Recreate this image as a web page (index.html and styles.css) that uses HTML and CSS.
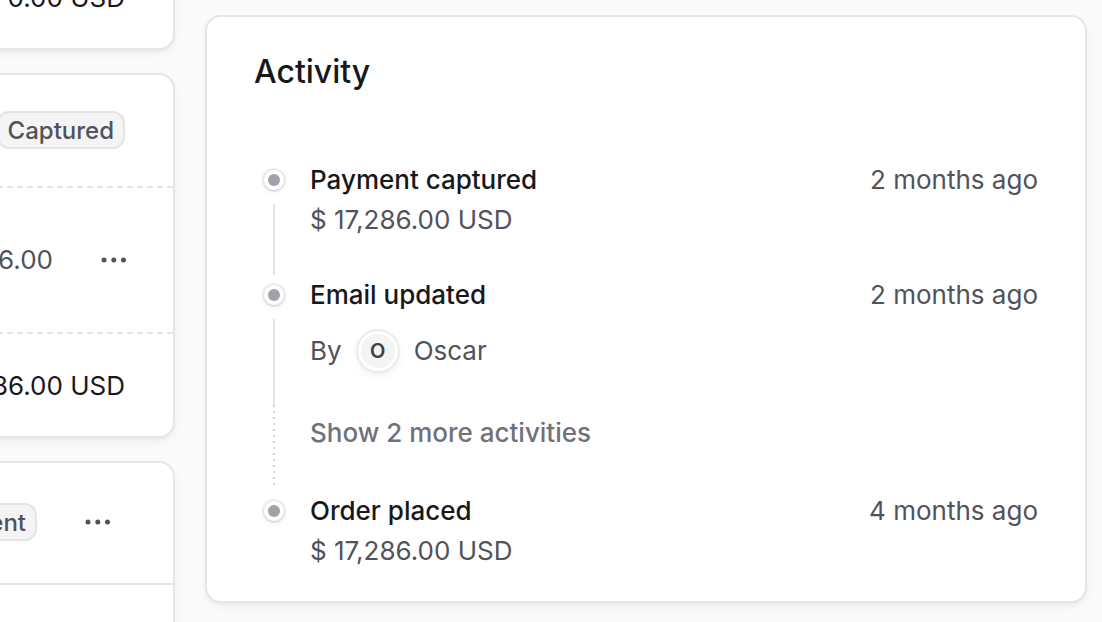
FILE: index.html
```html
<!DOCTYPE html>
<html lang="en">
<head>
<meta charset="utf-8">
<title>Order activity</title>
<link rel="stylesheet" href="styles.css">
</head>
<body>
<div class="page">
  <div class="side">
    <section class="card summary">
      <div class="sum-row">
        <span class="label">Outstanding amount</span>
        <span class="amt-strong">$ 0.00 USD</span>
      </div>
    </section>

    <section class="card payment">
      <div class="pay-head">
        <h3 class="card-title">Payment</h3>
        <span class="badge">Captured</span>
      </div>
      <div class="pay-row">
        <div class="pay-id">
          <span class="id">pay_01HQ2X</span>
          <span class="date">24 Jan, 2024</span>
        </div>
        <div class="pay-right">
          <span class="amt-subtle">$ 17,286.00</span>
          <button class="dots" type="button" aria-label="Actions">
            <svg width="26" height="6" viewBox="0 0 26 6"><circle cx="3" cy="3" r="2.5"/><circle cx="12.8" cy="3" r="2.5"/><circle cx="22.5" cy="3" r="2.5"/></svg>
          </button>
        </div>
      </div>
      <div class="pay-total">
        <span class="label">Total paid by customer</span>
        <span class="amt-strong">$ 17,286.00 USD</span>
      </div>
    </section>

    <section class="card fulfil">
      <div class="ful-head">
        <h3 class="card-title">Unfulfilled Items</h3>
        <div class="ful-right">
          <span class="badge">Awaiting fulfillment</span>
          <button class="dots" type="button" aria-label="Actions">
            <svg width="26" height="6" viewBox="0 0 26 6"><circle cx="3" cy="3" r="2.5"/><circle cx="12.8" cy="3" r="2.5"/><circle cx="22.5" cy="3" r="2.5"/></svg>
          </button>
        </div>
      </div>
      <div class="ful-row">
        <span class="label">Medusa Hoodie</span>
        <span class="amt-subtle">1x</span>
      </div>
    </section>
  </div>

  <section class="card activity">
    <h2 class="act-title">Activity</h2>
    <div class="timeline">
      <div class="item item-first">
        <div class="rail">
          <div class="dot-wrap"><div class="dot"><div class="dot-in"></div></div></div>
          <div class="line"></div>
        </div>
        <div class="content">
          <div class="head-row">
            <span class="ev-title">Payment captured</span>
            <span class="ev-time">2 months ago</span>
          </div>
          <div class="ev-body">$ 17,286.00 USD</div>
        </div>
      </div>

      <div class="item item-mid">
        <div class="rail">
          <div class="dot-wrap"><div class="dot"><div class="dot-in"></div></div></div>
          <div class="line"></div>
        </div>
        <div class="content">
          <div class="head-row">
            <span class="ev-title">Email updated</span>
            <span class="ev-time">2 months ago</span>
          </div>
          <div class="by-row">
            <span class="ev-body">By</span>
            <span class="avatar"><span class="avatar-in">O</span></span>
            <span class="ev-body">Oscar</span>
          </div>
        </div>
      </div>

      <div class="item item-more">
        <div class="rail">
          <div class="dotted"></div>
        </div>
        <div class="content">
          <button class="more" type="button">Show 2 more activities</button>
        </div>
      </div>

      <div class="item item-last">
        <div class="rail">
          <div class="dot-wrap"><div class="dot"><div class="dot-in"></div></div></div>
        </div>
        <div class="content">
          <div class="head-row">
            <span class="ev-title">Order placed</span>
            <span class="ev-time">4 months ago</span>
          </div>
          <div class="ev-body">$ 17,286.00 USD</div>
        </div>
      </div>
    </div>
  </section>
</div>
</body>
</html>
```

FILE: styles.css
```css
* { box-sizing: border-box; }

html, body {
  margin: 0;
  padding: 0;
  background: #fafafa;
  font-family: "Inter", "Noto Sans", sans-serif;
  color: #18181b;
  overflow: hidden;
}

.page {
  display: flex;
  align-items: flex-start;
  gap: 30px;
  padding-top: 15px;
  margin-left: -525px;
  width: 1612px;
}

.card {
  background: #ffffff;
  border: 2px solid #e6e6e9;
  border-radius: 16px;
  box-shadow: 0 2px 4px -2px rgba(0,0,0,0.08), 0 4px 8px rgba(0,0,0,0.04);
}

.side {
  flex: 0 0 700px;
  display: flex;
  flex-direction: column;
  gap: 23px;
  margin-top: -71px;
}

.card-title {
  margin: 0;
  font-size: 32px;
  line-height: 48px;
  font-weight: 500;
  color: #18181b;
}

.label {
  font-size: 26px;
  line-height: 40px;
  color: #52525b;
}

.amt-strong {
  font-size: 26px;
  line-height: 40px;
  color: #18181b;
}

.amt-subtle {
  font-size: 26px;
  line-height: 40px;
  color: #52525b;
}

.sum-row {
  display: flex;
  justify-content: space-between;
  padding: 32px 48px 30px 48px;
}

.badge {
  display: inline-flex;
  align-items: center;
  height: 38px;
  padding: 0 9px;
  border: 2px solid #e4e4e7;
  border-radius: 12px;
  background: #f4f4f5;
  color: #52525b;
  font-size: 24px;
  font-weight: 500;
  white-space: nowrap;
}

.pay-head {
  display: flex;
  align-items: center;
  justify-content: space-between;
  padding: 31px 48px 32px 48px;
}

.pay-row {
  display: flex;
  align-items: center;
  justify-content: space-between;
  padding: 32px 46px 32px 48px;
  border-top: 2px dashed #e4e4e7;
}

.pay-id {
  display: flex;
  flex-direction: column;
  font-size: 26px;
  line-height: 40px;
}

.pay-id .id { color: #18181b; font-weight: 500; }
.pay-id .date { color: #52525b; }

.pay-right {
  display: flex;
  align-items: center;
  gap: 48px;
}

.dots {
  display: flex;
  align-items: center;
  justify-content: center;
  width: 26px;
  height: 26px;
  padding: 0;
  border: 0;
  background: none;
  fill: #52525b;
}

.pay-total {
  display: flex;
  align-items: center;
  justify-content: space-between;
  padding: 32px 48px 30px 48px;
  border-top: 2px dashed #e4e4e7;
}

.ful-head {
  display: flex;
  align-items: center;
  justify-content: space-between;
  padding: 35px 62px 37px 48px;
}

.ful-right {
  display: flex;
  align-items: center;
  gap: 48px;
}

.ful-row {
  display: flex;
  align-items: center;
  justify-content: space-between;
  padding: 32px 48px;
  border-top: 2px solid #e4e4e7;
}

/* Activity card */
.activity {
  flex: 0 0 882px;
  padding: 31px 47px 30px 47px;
}

.act-title {
  margin: 0;
  font-size: 32px;
  line-height: 48px;
  font-weight: 500;
  color: #18181b;
}

.timeline {
  margin-top: 64px;
  display: flex;
  flex-direction: column;
}

.item {
  display: grid;
  grid-template-columns: 40px 1fr;
  column-gap: 16px;
  align-items: stretch;
}

.rail {
  display: flex;
  flex-direction: column;
  align-items: center;
}

.dot-wrap {
  width: 40px;
  height: 40px;
  display: flex;
  align-items: center;
  justify-content: center;
  flex: none;
}

.dot {
  width: 20px;
  height: 20px;
  border-radius: 50%;
  background: #ffffff;
  box-shadow: 0 0 0 2px rgba(0,0,0,0.08), 0 2px 4px -2px rgba(0,0,0,0.08), 0 4px 8px rgba(0,0,0,0.04);
  display: flex;
  align-items: center;
  justify-content: center;
}

.dot-in {
  width: 12px;
  height: 12px;
  border-radius: 50%;
  background: #a1a1aa;
}

.line {
  flex: 1;
  width: 2px;
  margin-top: 4px;
  background: #e4e4e7;
}

.dotted {
  flex: 1;
  width: 2px;
  margin-bottom: 4px;
  background-image: linear-gradient(#d4d4d8 34%, rgba(255,255,255,0) 0%);
  background-size: 2px 6px;
  background-repeat: repeat-y;
}

.item-first .content { padding-bottom: 35px; }
.item-mid .content { padding-bottom: 32px; }
.item-more .content { padding: 8px 0 38px 0; }

.head-row {
  display: flex;
  align-items: center;
  justify-content: space-between;
}

.ev-title {
  font-size: 26px;
  line-height: 40px;
  font-weight: 500;
  color: #18181b;
}

.ev-time {
  font-size: 26px;
  line-height: 40px;
  color: #52525b;
  text-align: right;
}

.ev-body {
  font-size: 26px;
  line-height: 40px;
  color: #52525b;
}

.by-row {
  margin-top: 14px;
  height: 44px;
  display: flex;
  align-items: center;
  gap: 14px;
}

.avatar {
  width: 44px;
  height: 44px;
  border-radius: 50%;
  background: #ffffff;
  box-shadow: inset 0 0 0 2px rgba(0,0,0,0.08), 0 2px 4px -2px rgba(0,0,0,0.08), 0 4px 8px rgba(0,0,0,0.04);
  display: flex;
  align-items: center;
  justify-content: center;
}

.avatar-in {
  width: 34px;
  height: 34px;
  border-radius: 50%;
  background: #f4f4f5;
  color: #3f3f46;
  font-size: 20px;
  font-weight: 600;
  display: flex;
  align-items: center;
  justify-content: center;
}

.more {
  padding: 0;
  border: 0;
  background: none;
  font-family: inherit;
  font-size: 26px;
  line-height: 40px;
  font-weight: 500;
  color: #71717a;
  cursor: pointer;
  text-align: left;
}
```
